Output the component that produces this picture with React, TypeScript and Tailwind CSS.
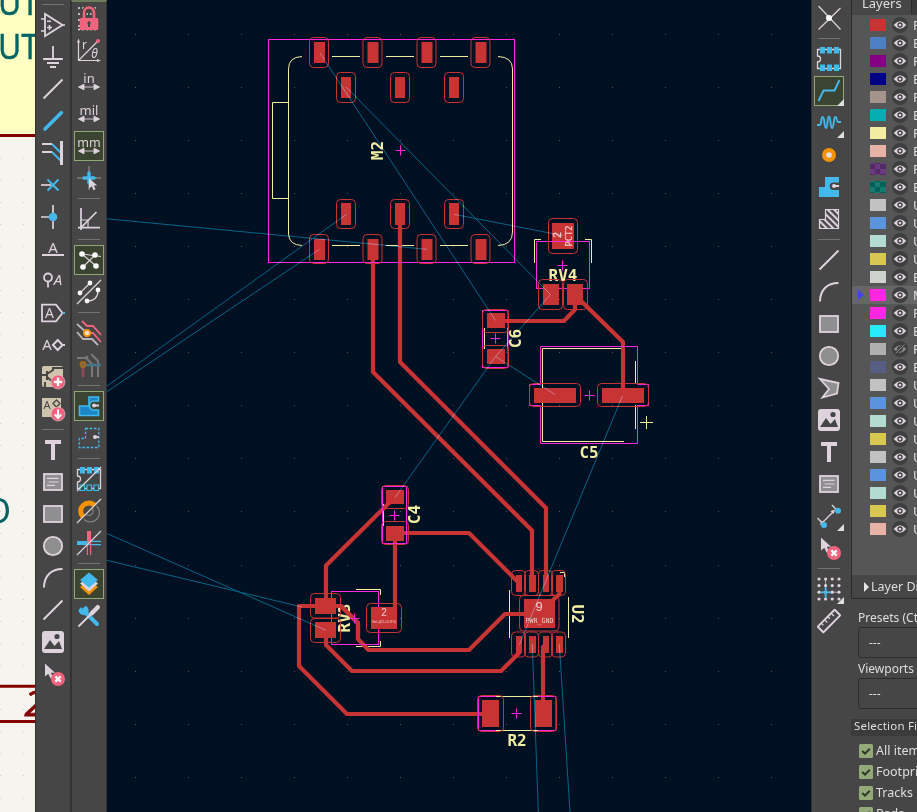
import React from "react";

const L = "#ded3dd";
const B = "#42b8eb";
const R = "#f2647e";
const O = "#f39200";
const G = "#8f8f8f";

const sans = "font-['Noto_Sans','Open_Sans',sans-serif]";

const cursor = <path d="M0 0V13L3.3 10.2L5.6 15L8 13.8L5.8 9.2H10Z" fill={L} />;
const stroke = { fill: "none", stroke: L, strokeWidth: 2 };

function Letter({ x, y, s = 14, children, italic, w }: any) {
  return (
    <text x={x} y={y} fontSize={s} fill={L} textAnchor="middle" fontStyle={italic ? "italic" : undefined} textLength={w}>
      {children}
    </text>
  );
}

const lineIcon = <path d="M-9.5 9.5L9.5 -9.5" {...stroke} />;
const arcIcon = <path d="M-9 9.5C-9 -2 -2 -9 9.5 -9" {...stroke} />;
const rectIcon = <rect x="-9" y="-8" width="18" height="16" fill={G} stroke={L} strokeWidth="1.8" />;
const circleIcon = <circle r="9.2" fill={G} stroke={L} strokeWidth="1.8" />;
const textIcon = <path d="M-8 -10H8V-6H2V10H-2V-6H-8Z" fill={L} />;
const textBoxIcon = (
  <>
    <rect x="-9" y="-8" width="18" height="16" fill={G} stroke={L} strokeWidth="1.8" />
    <path d="M-6 -3.6H5.5M-4.5 0H5.5M-6 3.4H2" stroke={L} strokeWidth="1.2" />
  </>
);
const imageIcon = (
  <>
    <rect x="-11" y="-11" width="22" height="22" rx="3" fill={L} />
    <path d="M-9 7L-3 -2L1.5 4L6 -1L9 7Z" fill="#464646" />
    <circle cx="4" cy="-5.5" r="2.6" fill="#464646" />
  </>
);
const deleteIcon = (
  <>
    <g transform="translate(-8,-10.5)">{cursor}</g>
    <circle cx="5" cy="5" r="7" fill={R} />
    <path d="M2.4 2.4L7.6 7.6M7.6 2.4L2.4 7.6" stroke="#fff" strokeWidth="2.2" />
  </>
);
const footprint = (
  <>
    <path d="M-11.5 -9.5H11.5V9.5H-11.5V3A3 3 0 0 0 -11.5 -3Z" fill="none" stroke={L} strokeWidth="1.3" />
    <path d="M-9 -12H-4V-5.5H-9ZM-2 -12H3V-5.5H-2ZM5 -12H10V-5.5H5Z" fill={B} />
  </>
);
const ruleArrow = <path d="M-6 5H6M-10.5 5L-5 2.2V7.8ZM10.5 5L5 2.2V7.8Z" fill={L} stroke={L} strokeWidth=".9" />;

const icons: Record<string, React.ReactNode> = {
  opamp: (
    <>
      <path d="M-8 -11V11L9.5 0Z" {...stroke} strokeWidth={1.8} />
      <path d="M-12 -6H-8M-12 6H-8M9 0H12M-6 -3.7H-2M-6 2.5H-1M-3.5 0V5" {...stroke} strokeWidth={1.6} />
    </>
  ),
  ground: <path d="M0 -11V2M-9.8 2H9.8M-6 6H6M-3 10H3" {...stroke} strokeWidth={1.8} />,
  line: lineIcon,
  bus: <path d="M-8 8L8.3 -8.3" stroke={B} strokeWidth="3.6" strokeLinecap="round" />,
  busEntry: (
    <>
      <path d="M-11 -9H-1M-11 -1H-1" {...stroke} />
      <path d="M-1 -9L9 1M-1 -1L9 9" stroke={B} strokeWidth="2" />
      <path d="M8.5 -12V12" stroke={L} strokeWidth="3" />
    </>
  ),
  noConnect: (
    <>
      <path d="M-12 0H-2" {...stroke} strokeWidth={1.7} />
      <path d="M-5.5 -5.5L5.5 5.5M-5.5 5.5L5.5 -5.5" stroke={B} strokeWidth="2" />
    </>
  ),
  junction: (
    <>
      <path d="M-12 0H0M0 -12V12" {...stroke} strokeWidth={1.7} />
      <circle r="4.3" fill={B} />
    </>
  ),
  netLabel: (
    <>
      <Letter x={0} y={3.5} s={15}>A</Letter>
      <path d="M-11 6H11" {...stroke} />
    </>
  ),
  netClass: (
    <>
      <circle cx="-5" cy="-3.5" r="4" {...stroke} strokeWidth={1.8} />
      <path d="M-5 .5V6.5" {...stroke} strokeWidth={1.8} />
      <Letter x={5} y={4} s={15} italic>A</Letter>
    </>
  ),
  globalLabel: (
    <>
      <path d="M-11 -8.4H3L9.5 0L3 8.4H-11Z" {...stroke} strokeWidth={1.8} />
      <Letter x={-3.6} y={5} s={14}>A</Letter>
      <path d="M9.5 0H12" stroke={B} strokeWidth="2" />
    </>
  ),
  hierLabel: (
    <>
      <Letter x={-6} y={5.2} s={15}>A</Letter>
      <path d="M4.7 -5L9.5 0L4.7 5L-.1 0ZM9.5 0H12" {...stroke} />
    </>
  ),
  sheet: (
    <>
      <rect x="-11" y="-11" width="21" height="21" rx="2" fill="#cfc4ac" />
      <path d="M-11 -2H-7M-6 -6V3M-6 -3L0 -7V-9H10M-6 0L0 5M-8 5V10" fill="none" stroke="#464646" strokeWidth="2" />
      <circle cx="5" cy="5" r="7" fill={R} stroke="#e8d8d8" strokeWidth=".5" />
      <path d="M5 .8V9.2M.8 5H9.2" stroke="#fff" strokeWidth="2.4" />
    </>
  ),
  sheetPin: (
    <>
      <rect x="-11" y="-11" width="19" height="19" fill="#cfc4ac" />
      <text x="-6" y="-.5" fontSize="11" fill="#464646" textAnchor="middle">A</text>
      <path d="M3.5 -9L7 -5.5L3.5 -2L0 -5.5Z" fill="none" stroke="#464646" strokeWidth="1.3" />
      <circle cx="5" cy="5" r="7" fill={R} stroke="#e8d8d8" strokeWidth=".5" />
      <path d="M5 .5V8M1.8 5.5L5 9L8.2 5.5" fill="none" stroke="#fff" strokeWidth="2" />
    </>
  ),
  text: textIcon,
  textBox: textBoxIcon,
  rect: rectIcon,
  circle: circleIcon,
  arc: arcIcon,
  image: imageIcon,
  del: deleteIcon,
  lock: (
    <>
      <path d="M-10 -10H10M-10 -4H10M-10 2H10M-10 8H10M-10 11.5H10" stroke={L} strokeWidth="2.2" strokeLinecap="round" strokeDasharray="0 4" />
      <path d="M-5 1V-5.5A5 5 0 0 1 5 -5.5V1" fill="none" stroke="#464646" strokeWidth="5" />
      <path d="M-5 1V-5.5A5 5 0 0 1 5 -5.5V1" fill="none" stroke={R} strokeWidth="2.6" />
      <rect x="-9.3" y="0" width="18.6" height="12" rx="1.5" fill={R} />
      <path d="M0 3.3A1.8 1.8 0 0 1 1 6.5V9H-1V6.5A1.8 1.8 0 0 1 0 3.3Z" fill="#464646" />
    </>
  ),
  polar: (
    <>
      <path d="M-10.5 -8V10.5H8M-10.5 10.5L8 -8" {...stroke} strokeWidth={1.2} />
      <path d="M-10.5 -11.5L-12 -7.5H-9ZM12 10.5L8 9V12Z" fill={L} />
      <circle cx="9" cy="-9" r="2.1" fill={R} />
      <Letter x={-4.5} y={-1} s={12}>r</Letter>
      <Letter x={5.5} y={8} s={12} italic>θ</Letter>
    </>
  ),
  inch: (<><Letter x={0} y={1} s={13}>in</Letter>{ruleArrow}</>),
  mil: (<><Letter x={0} y={1} s={13}>mil</Letter>{ruleArrow}</>),
  mm: (<><Letter x={0} y={1} s={12.5}>mm</Letter>{ruleArrow}</>),
  crosshair: (
    <>
      <path d="M0 -12V12M-12 0H12" stroke="#9a959a" strokeWidth="1" />
      <path d="M0 -5V5M-5 0H5" stroke={B} strokeWidth="3.4" strokeLinecap="round" />
      <g transform="translate(0,0) scale(.82)">{cursor}</g>
    </>
  ),
  angle: (
    <>
      <path d="M-8 -11V11M-11 8.6H11M-8 8.6L7.5 -7" {...stroke} strokeWidth={1.7} />
      <path d="M-8 1H-1V8.6" {...stroke} strokeWidth={1.2} />
    </>
  ),
  ratsnest: (
    <>
      <path d="M-7 -6L12 -3.5M-7 -6L7 6M-6 7L6 -5" {...stroke} strokeWidth={1.2} />
      {[[-7, -6], [6, -5], [-6, 7], [7, 6]].map(([x, y]) => <circle key={x + "," + y} cx={x} cy={y} r="2.8" fill="#fff" />)}
    </>
  ),
  curvedRats: (
    <>
      <path d="M-12 12L12 -12M-9 1L1 -9M9 -2C9 5 5 9 -2 9" {...stroke} strokeWidth={1.3} />
      {[[-9, 1], [1, -9], [9, -2], [-2, 9]].map(([x, y]) => <circle key={x + "," + y} cx={x} cy={y} r="2.4" fill="#fff" />)}
    </>
  ),
  highlight: (
    <>
      <path d="M-12 -9L-2 0M-12 -1L-6 6H3L9 12" fill="none" stroke="#bdb5bc" strokeWidth="1.8" />
      <path d="M-7 -12L-2 -7H4L12 2M-2 0H4L12 9" fill="none" stroke={R} strokeWidth="1.8" />
      <circle cx="-2" cy="0" r="3.2" fill="#ffe3b0" stroke={O} strokeWidth="1.8" />
    </>
  ),
  dimLayers: (
    <>
      <path d="M-12 -7H-3L3 -1V12M2 -11L9 -4V12M-3 -9L-1 -7" fill="none" stroke="#7b787b" strokeWidth="2" />
      <path d="M-6 0H12" stroke="#44758a" strokeWidth="2.6" />
      <path d="M-6 0V12" stroke="#8d4a5c" strokeWidth="2.8" />
      <circle cx="-6" cy="-.5" r="2.6" fill="#7c6a4c" stroke="#a06c1c" strokeWidth="1.6" />
    </>
  ),
  zone: (
    <>
      <path d="M0 -9H9.5V-5H5A4.2 4.2 0 0 0 5 4H9.5V9.5H-9.5V0H0Z" fill="#1d86c6" stroke={B} strokeWidth="1.6" />
      <path d="M4.5 -.5H10" stroke={L} strokeWidth="2" /><circle cx="5" cy="-.5" r="2" fill={L} />
    </>
  ),
  zoneOutline: (
    <>
      <path d="M-3.5 -9.5H9.8V9.5H-9.8V0.5H-3.5Z" fill="none" stroke={B} strokeWidth="1.3" strokeDasharray="2.6 1.6" />
      <path d="M5 -1H10" stroke={L} strokeWidth="1.8" /><circle cx="6" cy="-1" r="2" fill={L} />
    </>
  ),
  padSketch: (
    <>
      {footprint}
      <path d="M-9 6H-4.5V11.5H-9ZM-2 6H2.5V11.5H-2ZM5 6H9.5V11.5H5Z" fill="#464646" stroke={B} strokeWidth="1.2" />
      <path d="M-12 12L12 -12" {...stroke} strokeWidth={1.2} />
    </>
  ),
  viaSketch: (
    <>
      <path d="M-5.5 5.5A8 8 0 1 1 6.5 -6" fill="none" stroke={O} strokeWidth="5" transform="translate(-.5,.5)" />
      <path d="M7.5 -5A9 9 0 0 1 -5 8.5M3 -2.5A4 4 0 0 1 -3 3" fill="none" stroke="#858285" strokeWidth="1.2" />
      <path d="M-12 12L12 -12" {...stroke} strokeWidth={1.2} />
    </>
  ),
  trackSketch: (
    <>
      <path d="M-12 0H0" stroke={B} strokeWidth="4" /><path d="M0 -1.7H12M0 1.7H12" stroke={B} strokeWidth="1.2" />
      <path d="M0 -12V0" stroke={R} strokeWidth="4" /><path d="M-1.6 0V12M1.6 0V12" stroke={R} strokeWidth="1.2" />
      <path d="M-12 12L12 -12" {...stroke} strokeWidth={1.1} />
    </>
  ),
  layers: (
    <>
      <path d="M-9 3L0 11L9 3L0 -4Z" fill={O} /><path d="M-9 -.5L0 7.5L9 -.5L0 -8Z" fill={L} /><path d="M-9 -4L0 3.8L9 -4L0 -11.5Z" fill={B} />
    </>
  ),
  tools: (
    <>
      <path d="M-5 -5L8 8" stroke={B} strokeWidth="4" strokeLinecap="round" />
      <path d="M-3.5 -10.3L-6.5 -7.3L-8 -8.8L-10.5 -6A5.6 5.6 0 0 0 -1 -2.5A5.6 5.6 0 0 0 -3.5 -10.3Z" fill={B} />
      <path d="M-10.5 10.5L2 -2" stroke={L} strokeWidth="1.8" />
      <path d="M2.5 -2.5L8.8 -8.8" stroke={L} strokeWidth="4.4" strokeLinecap="round" />
    </>
  ),
  localRats: (<><path d="M-10.5 -12L11.5 11.5M11.5 -10L-10.5 11.5" {...stroke} strokeWidth={1.2} /><circle r="3" fill="#fff" /></>),
  footprint: (<>{footprint}<path d="M-9 5.5H-4V12H-9ZM-2 5.5H3V12H-2ZM5 5.5H10V12H5Z" fill={B} /></>),
  route: <path d="M-10.5 10L-5.5 -.5H5.5L10.5 -11" fill="none" stroke={B} strokeWidth="2" />,
  tune: <path d="M-12 2H-9.5C-7 2 -8.5 -6 -6.3 -6S-5 5 -3 5S-2 -6.5 0 -6.5S1 5 3 5S4.5 -6 6.3 -6S7.5 -1 9 -1H12" fill="none" stroke={B} strokeWidth="1.9" />,
  via: <circle r="4.9" fill="#e3dde2" stroke={O} strokeWidth="4.2" />,
  zoneFill: (
    <>
      <path d="M-4 -10H10V10H-10V0H-4Z" fill={B} />
      <path d="M10 -4.5H4.5A3.6 3.6 0 0 0 4.5 3H10Z" fill="#464646" /><path d="M10 -1H5.5" stroke={L} strokeWidth="2" /><circle cx="5" cy="-1" r="2" fill={L} />
    </>
  ),
  ruleArea: (
    <>
      <defs><pattern id="hatch" width="4.6" height="4.6" patternUnits="userSpaceOnUse" patternTransform="rotate(-45)"><rect width="2.1" height="4.6" fill={L} /></pattern></defs>
      <path d="M-3.5 -9.5H9.5V9.5H-9.5V.5H-3.5Z" fill="url(#hatch)" stroke={L} strokeWidth="1.2" />
    </>
  ),
  polygon: <path d="M-9 -9L9.5 -5L8 5.5L-6.5 9.5L0 1Z" fill={G} stroke={L} strokeWidth="1.8" />,
  dimension: (
    <g transform="translate(0,2)">
      <path d="M-7 5L5 -7M-11.5 0L-5 7M3 -13L9.5 -6" {...stroke} strokeWidth={1.3} />
      <path d="M-9 7L-7.5 2.5L-4.5 5.5ZM6 -8.5L1.5 -7L4.5 -4Z" fill={L} />
      <circle cx="-5" cy="7" r="3" fill={B} /><circle cx="9" cy="-7.3" r="3" fill={B} />
    </g>
  ),
  origin: (
    <>
      {[-10, -3.4, 3.2, 10].map((y) => [-10, -3.4, 3.2, 10].map((x) => <circle key={x + "," + y} cx={x} cy={y} r="1.6" fill={L} />))}
      <path d="M-10 3.2H10M-3.4 -10V10" stroke={L} strokeWidth=".7" />
      <path d="M-8.4 3.4H1.6M-3.4 -2V9" stroke={B} strokeWidth="1.8" />
    </>
  ),
  measure: (
    <g transform="rotate(-45)">
      <rect x="-12" y="-4" width="24" height="8" rx=".5" {...stroke} strokeWidth={1.9} />
      <path d="M-7 -4V-1M-2.3 -4V0M2.3 -4V-1M7 -4V0" {...stroke} strokeWidth={1.3} />
    </g>
  ),
};

function Toolbar({ items, active = [], menus = [], className = "" }: { items: string[]; active?: string[]; menus?: string[]; className?: string }) {
  return (
    <div className={`flex shrink-0 flex-col items-center overflow-hidden bg-[#464646] ${className}`}>
      {items.map((n, i) =>
        n === "-" ? (
          <div key={i} className="flex h-[9px] shrink-0 items-center"><div className="h-px w-[22px] bg-[#737373]" /></div>
        ) : (
          <div key={i} className="flex h-8 w-8 shrink-0 items-center justify-center">
            <div className={`flex h-[30px] w-[30px] items-center justify-center border ${active.includes(n) ? "border-[#91a876] bg-[#3b4431]" : "border-transparent"}`}>
              <svg className={`h-[28px] w-[28px] shrink-0 overflow-visible ${sans}`} viewBox="-14 -14 28 28">
                {icons[n]}
                {menus.includes(n) && <path d="M15 8V15H8Z" fill="#dedede" />}
              </svg>
            </div>
          </div>
        ),
      )}
    </div>
  );
}

const left1 = ["-", "opamp", "ground", "line", "bus", "busEntry", "noConnect", "junction", "netLabel", "netClass", "globalLabel", "hierLabel", "sheet", "sheetPin", "-", "text", "textBox", "rect", "circle", "arc", "line", "image", "del"];
const left2 = ["lock", "polar", "inch", "mil", "mm", "crosshair", "-", "angle", "-", "ratsnest", "curvedRats", "-", "highlight", "dimLayers", "-", "zone", "zoneOutline", "-", "padSketch", "viaSketch", "trackSketch", "-", "layers", "tools"];
const right = ["localRats", "-", "footprint", "route", "tune", "via", "zoneFill", "ruleArea", "-", "line", "arc", "rect", "circle", "polygon", "image", "text", "textBox", "dimension", "del", "-", "origin", "measure"];

function Schematic() {
  return (
    <svg className="h-[812px] w-[35px] shrink-0 bg-[#f5f4ef] font-['Noto_Sans',sans-serif]" viewBox="0 0 35 812">
      {Array.from({ length: 31 }, (_, i) => (
        <g key={i} fill="#cfcfcb"><rect x="0" y={Math.round(136 + i * 22.05)} width="1" height="1" /><rect x="23" y={Math.round(136 + i * 22.05)} width="1" height="1" /></g>
      ))}
      <rect width="35" height="134" fill="#ffffc2" />
      <rect y="134" width="35" height="3" fill="#840000" />
      <g fill="#006464" stroke="#006464" strokeWidth=".4" fontSize="35">
        <text x="-2" y="15" textLength="41" lengthAdjust="spacingAndGlyphs">UT</text>
        <text x="-2" y="59" textLength="41" lengthAdjust="spacingAndGlyphs">UT</text>
      </g>
      <text x="11" y="523" fontSize="34" fill="#006464" textAnchor="end">O</text>
      <path d="M0 686.2H35M0 721.5H35" stroke="#840000" strokeWidth="3" />
      <text x="24.5" y="716" fontSize="35" fontStyle="italic" fill="#840000" stroke="#840000" strokeWidth=".8">2</text>
    </svg>
  );
}

const RED = "#c83434";
const MAG = "#ff26e2";
const SILK = "#f2eda1";

/* Each pad: x, y, w, h of the copper followed by x, y, w, h of its clearance outline. */
const pads: number[][] = [
  ...[314, 367.5, 421.5, 475.5].flatMap((x) => [[x, 42, 11, 21, x - 4.5, 37.5, 19, 30], [x, 239, 11, 21, x - 4.5, 234.5, 19, 29]]),
  ...[341, 395, 449].flatMap((x) => [[x, 77, 10, 21, x - 4.5, 72.5, 19, 30], [x, 203, 10, 22, x - 4.5, 199.5, 19, 29]]),
  [552, 223, 22, 26, 548.5, 218.5, 29, 35],
  [543, 284, 16, 21, 538.5, 279.5, 24, 30],
  [567, 284, 16, 21, 563.5, 279.5, 24, 30],
  [487, 313, 18, 15, 482.5, 309.5, 26, 23],
  [487, 349, 18, 15, 482.5, 345.5, 26, 23],
  [534, 388, 42, 15, 529.5, 383.5, 51, 23],
  [602, 388, 42, 15, 597.5, 383.5, 51, 23],
  [386, 490, 18, 14, 381.5, 485.5, 27, 23],
  [386, 526, 18, 15, 381.5, 521.5, 27, 23],
  [315, 598, 21, 16, 310.5, 593.5, 30, 24.5],
  [315, 622, 21, 16, 310.5, 618.5, 30, 24],
  [371, 607, 26, 22, 366.5, 603.5, 35, 29],
  ...[[516, 6], [529, 7], [543, 6], [556, 7]].flatMap(([x, w]) => [[x, 575, w, 17, x - 4.5, 570.5, 14, 25], [x, 636, w, 17, x - 4.5, 632, 14, 25]]),
  [524, 599, 31, 29, 519.5, 595.5, 39.5, 35.5],
  [482, 700, 17, 27, 477.5, 695.5, 26, 36],
  [535, 700, 17, 27, 530.5, 695.5, 26, 36],
];

const tracks = [
  "M373 250V372L532 530.5V582",
  "M400 214V362L546 508V580",
  "M496 321H564L575 309.5V295L623 342V395",
  "M395 497L326 565.5V606",
  "M395 610V533H469L518 582",
  "M326 606H299V666L347 714H490",
  "M336 606H341L358 623V639L368.5 650H469L505 614H530",
  "M326 630V645L352 671H501L519 653V645",
  "M543 714V647L546 644",
  "M559.5 584V594L553 600",
];

const airwires = [
  "M320 53L495.5 320.5", "M346 87L550.5 294.5L495.5 356.5L395 497.5", "M495.5 356.5L555 394.5", "M454 214.3L562.5 235.5",
  "M427 249.3L107 218.8", "M346.5 214.3L107 386", "M319.5 249.3L107 391.5", "M622.6 395.5L519.5 644.5",
  "M107 533.5L326 630.3", "M107 560.3L302 607", "M532.3 644.3L538.3 812", "M559.3 644.3L570 812",
];

const crosses = [[400.5, 150.5], [562.5, 265.5], [495.5, 338.5], [589.5, 395.5], [394.5, 515.5], [354.5, 618.5], [516.5, 713.5]];

const refs: [string, number, number, number][] = [
  ["M2", 377, 150.5, -90], ["RV4", 563, 275, 0], ["C6", 515, 338.5, -90], ["C5", 589, 452.5, 0],
  ["C4", 414, 514.5, -90], ["RV3", 344, 618, -90], ["U2", 577.5, 614, 90], ["R2", 517, 740.5, 0],
];

function Board() {
  const dots = [];
  for (let y = 0; y < 15; y++) for (let x = -5; x < 8; x++) dots.push([Math.round(400 + x * 53.05), Math.round(34 + y * 53.05)]);
  return (
    <svg className="h-[812px] w-[704px] shrink-0 bg-[#001023]" viewBox="107 0 704 812">
      {dots.map(([x, y]) => <rect key={x + "," + y} x={x} y={y} width="1" height="1" fill="#4b5560" />)}
      <g fill="none" stroke={SILK} strokeWidth="1">
        <path d="M302 56.5Q288.5 57 288.5 69V234Q289 245 302 245.5M498 56.5Q512.5 57 512.5 69V232Q512.5 245 498 245.5M288.5 102.5H272.5V198.5H288.5" />
        <path d="M332 56.5H360M386 56.5H414M440 56.5H468M332 245.5H360M386 245.5H414M440 245.5H468" />
        <path d="M534.5 263V239.5H541M585 239.5H591.5V263M484.5 328V349M507.5 328V349" />
        <path d="M622 348.5H542.5V441.5H624M635.5 361V384M635.5 405V429M640 422.5H653M646.5 416V429" />
        <path d="M383.5 504V526M406.5 504V526M356 589.5H380.5V595M356 646.5H380.5V641" />
        <path d="M509.5 590V638M568.5 597V638M560 572.5H564.5V577M496 696.5H538M496 730.5H538" />
      </g>
      <g fill={RED}>{pads.map((p, i) => <rect key={i} x={p[0]} y={p[1]} width={p[2]} height={p[3]} />)}</g>
      <g fill="none" stroke={RED} strokeWidth="4.2" strokeLinecap="round" strokeLinejoin="round">{tracks.map((d) => <path key={d} d={d} />)}</g>
      <g fill={SILK} className="font-['DejaVu_Sans_Mono',monospace] font-bold" fontSize="16" textAnchor="middle">
        {refs.map(([t, x, y, a]) => <text key={t} transform={`translate(${x},${y}) rotate(${a})`} y="5.8">{t}</text>)}
      </g>
      <path d="M326 606H341L358 623V639" fill="none" stroke={RED} strokeWidth="4.2" />
      <g fill="none" stroke={MAG} strokeWidth="1">
        <rect x="268.5" y="39.5" width="246" height="223" />
        <rect x="536.5" y="241.5" width="53" height="47" />
        <rect x="482.5" y="310.5" width="25.5" height="57" />
        <path d="M540.5 384.5V346.5H637.5V384.5H648.5V405.5H637.5V443.5H540.5V405.5H529.5V384.5Z" />
        <rect x="382.5" y="486.5" width="24" height="57" />
        <rect x="331.5" y="591.5" width="47" height="53" />
        <path d="M496 696.5H478.5V730.5H496M538 696.5H556V730.5H538" />
        {crosses.map(([x, y]) => <path key={y} d={`M${x - 5} ${y}H${x + 5}M${x} ${y - 5}V${y + 5}`} />)}
      </g>
      <g fill="none" stroke={RED} strokeWidth="1">{pads.map((p, i) => <rect key={i} x={p[4]} y={p[5]} width={p[6]} height={p[7]} rx="4" />)}</g>
      <g fill={RED}><rect x="371" y="607" width="26" height="22" /><rect x="552" y="223" width="22" height="18" /><rect x="543" y="284" width="16" height="21" /><rect x="567" y="284" width="16" height="21" /><rect x="315" y="598" width="21" height="16" /><rect x="315" y="622" width="21" height="16" /></g>
      <g fill="#eecaca" className="font-['Liberation_Sans',sans-serif]" textAnchor="middle">
        <text transform="translate(561,235) rotate(-90)" fontSize="10" stroke="#eecaca" strokeWidth=".3">2</text>
        <text transform="translate(572,236) rotate(-90)" fontSize="9" stroke="#eecaca" strokeWidth=".2" textLength="21" lengthAdjust="spacingAndGlyphs" className="font-['DejaVu_Sans_Mono',monospace]">PCT2</text>
        <text x="384" y="616" fontSize="10">2</text>
        <text x="384" y="623" fontSize="4" textLength="24" lengthAdjust="spacingAndGlyphs">Net-(U2-OUT0)</text>
        <text x="539" y="610.5" fontSize="13">9</text>
        <text x="539.5" y="623" fontSize="7" textLength="28" lengthAdjust="spacingAndGlyphs" className="font-['DejaVu_Sans_Mono',monospace]">PWR_GND</text>
      </g>
      <g fill="none" stroke="#005a70" strokeWidth="1" className="mix-blend-screen">{airwires.map((d) => <path key={d} d={d} />)}</g>
    </svg>
  );
}

const layers: [string, string, string?][] = [
  ["#c83434", "F.Cu"], ["#4d7fc4", "B.Cu"], ["#840084", "F.Adhesive"], ["#000084", "B.Adhesive"], ["#a4948c", "F.Paste"], ["#02aeb0", "B.Paste"],
  ["#f2eda1", "F.Silkscreen"], ["#e8b2a7", "B.Silkscreen"], ["#6b3a80", "F.Mask", "#532a64"], ["#17796f", "B.Mask", "#046058"],
  ["#c2c2c2", "User.Drawings"], ["#5994dc", "User.Comments"], ["#b4dbd2", "User.Eco1"], ["#d8c852", "User.Eco2"], ["#d0d2cd", "Edge.Cuts"],
  ["#ff26e2", "Margin"], ["#ff26e2", "F.Courtyard"], ["#26e9ff", "B.Courtyard"], ["#afafaf", "F.Fab"], ["#585d84", "B.Fab"],
  ["#c2c2c2", "User.1"], ["#5994dc", "User.2"], ["#b4dbd2", "User.3"], ["#d8c852", "User.4"], ["#c2c2c2", "User.5"], ["#5994dc", "User.6"], ["#b4dbd2", "User.7"], ["#d8c852", "User.8"], ["#e8b2a7", "User.9"],
];

function Eye({ hidden }: { hidden: boolean }) {
  const c = hidden ? "#8c8a8c" : L;
  return (
    <svg className="ml-[6px] h-4 w-4 shrink-0" viewBox="-8 -8 16 16">
      <circle r="8" fill="#3e3e3e" />
      <path d="M-6.3 0Q0 -7.4 6.3 0Q0 7.4 -6.3 0Z" fill={c} />
      <circle r="2" fill={c} stroke="#3e3e3e" strokeWidth="1.3" />
      {hidden && <path d="M-4.5 4.5L4.5 -4.5" stroke="#3e3e3e" strokeWidth="2.6" />}
      {hidden && <path d="M-4.5 4.5L4.5 -4.5" stroke={c} strokeWidth="1" />}
    </svg>
  );
}

function Panel() {
  return (
    <div className={`flex w-[66px] shrink-0 flex-col overflow-hidden whitespace-nowrap bg-[#464646] text-[13px] text-[#dfdfdf] ${sans}`}>
      <div className="flex h-[599px] shrink-0 flex-col border-b border-l border-[#2b2b2b]">
        <div className="flex h-[15px] shrink-0 bg-[#3a3a3a]">
          <div className="flex w-[60px] shrink-0 items-end border-r border-[#2b2b2b] bg-[#464646] pl-2.5 leading-[20px]"><span className="mb-[2px]">Layers</span></div>
        </div>
        <div className="flex h-[560px] shrink-0 flex-col bg-[#565656] pt-px">
          {layers.map(([c, name, alt], i) => (
            <div key={i} className={`flex h-[18px] shrink-0 items-center ${i === 15 ? "bg-[#666666]" : ""}`}>
              <div className="flex w-[18px] shrink-0 items-center pl-[6px]">
                {i === 15 && <div className="h-0 w-0 border-y-[5px] border-l-[6px] border-y-transparent border-l-[#4244f0]" />}
              </div>
              <svg className="h-3 w-4 shrink-0" viewBox="0 0 16 12">
                <rect width="16" height="12" fill={c} />
                {alt && <path d="M0 1H5V6H0ZM10 1H16V6H10ZM5 6H10V11H5ZM5 0H10V1H5ZM0 11H5V12H0ZM10 11H16V12H10Z" fill={alt} />}
              </svg>
              <Eye hidden={i === 18} />
              <span className="ml-[5px] leading-[18px]">{name}</span>
            </div>
          ))}
        </div>
        <div className="flex h-[23px] shrink-0 items-center pl-3">
          <div className="h-0 w-0 border-y-[5px] border-l-[5px] border-y-transparent border-l-[#e4e4e4]" />
          <span className="ml-[2px] pt-[2px] text-[12.5px]">Layer Display Options</span>
        </div>
      </div>
      <div className="flex shrink-0 flex-col pl-[7px] text-[12px]">
        <div className="mt-[10px] h-[18px] leading-[18px]">Presets (Ctrl+Tab):</div>
        <div className="flex h-[31px] w-[120px] items-center rounded-[3px] border border-[#2d2d2d] pl-2.5">---</div>
        <div className="mt-[2px] h-[18px] leading-[18px]">Viewports (Alt+Tab):</div>
        <div className="flex h-[31px] w-[120px] items-center rounded-[3px] border border-[#2d2d2d] pl-2.5">---</div>
      </div>
      <div className="mt-[10px] flex h-[17px] shrink-0 items-center bg-[#3b3b3b] pb-[3px] pl-[3px] text-[11.5px] tracking-[0.2px]">Selection Filter</div>
      <div className="flex shrink-0 flex-col pl-2 pt-[4.5px]">
        {["All items", "Footprints", "Tracks", "Pads"].map((t) => (
          <div key={t} className="flex h-[21px] shrink-0 items-center gap-[3px] text-[12.5px]">
            <svg className="h-[14px] w-[14px] shrink-0" viewBox="0 0 14 14"><rect width="14" height="14" rx="1.5" fill="#93aa78" /><path d="M3.2 7L6 9.6L10.8 4.8" fill="none" stroke="#2f362a" strokeWidth="2" /></svg>
            {t}
          </div>
        ))}
      </div>
    </div>
  );
}

export default function App() {
  return (
    <div className="flex h-[812px] w-[917px] overflow-hidden bg-[#464646]">
      <Schematic />
      <Toolbar items={left1} className="w-9 border-x border-[#333333]" />
      <Toolbar items={left2} active={["mm", "ratsnest", "zone", "layers"]} className="w-9 border-x border-t-[2px] border-[#333333] border-t-[#6d7c5c]" />
      <Board />
      <Toolbar items={right} active={["route"]} menus={["route", "tune", "dimension", "origin"]} className="w-10 border-l border-[#333333] pt-[2px] pr-[5px]" />
      <Panel />
    </div>
  );
}
